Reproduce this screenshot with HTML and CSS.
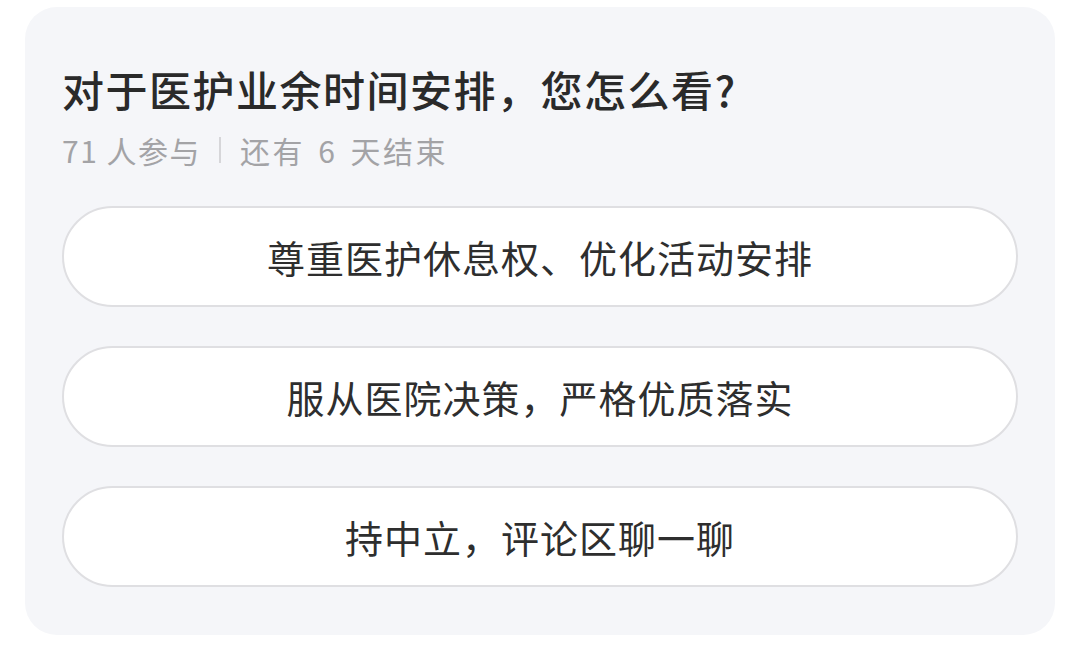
FILE: index.html
```html
<!DOCTYPE html>
<html lang="zh-CN">
<head>
<meta charset="utf-8">
<link rel="stylesheet" href="styles.css">
</head>
<body>
<div class="card">
  <h1 class="title">对于医护业余时间安排，您怎么看?</h1>
  <div class="meta"><span>71 人参与</span><span class="sep"></span><span class="remain">还有 6 天结束</span></div>
  <div class="options">
    <div class="option">尊重医护休息权、优化活动安排</div>
    <div class="option">服从医院决策，严格优质落实</div>
    <div class="option">持中立，评论区聊一聊</div>
  </div>
</div>
</body>
</html>
```
FILE: styles.css
```css
html, body {
  margin: 0;
  padding: 0;
  background: #ffffff;
}
body {
  font-family: "Noto Sans CJK SC", "Noto Sans", sans-serif;
  width: 1080px;
  height: 660px;
  overflow: hidden;
}
.card {
  margin: 7px 25px 0 25px;
  height: 628px;
  box-sizing: border-box;
  background: #f5f6f9;
  border-radius: 32px;
  padding: 56px 37px 0 37px;
}
.title {
  margin: 0;
  font-size: 42px;
  line-height: 52px;
  font-weight: 500;
  color: #2a2a2a;
  letter-spacing: 1.5px;
  white-space: nowrap;
}
.meta {
  display: flex;
  align-items: center;
  margin-top: 15px;
  font-size: 30px;
  line-height: 40px;
  color: #a3a3a6;
  letter-spacing: 1.5px;
  white-space: pre;
}
.remain {
  letter-spacing: 2.5px;
  word-spacing: 4px;
}
.sep {
  display: inline-block;
  width: 2px;
  height: 26px;
  background: #d6d6d9;
  margin: 0 19px 0 18px;
}
.options {
  display: flex;
  flex-direction: column;
  gap: 39px;
  margin-top: 36px;
}
.option {
  height: 101px;
  box-sizing: border-box;
  border: 2px solid #dfdfe2;
  border-radius: 51px;
  background: #ffffff;
  display: flex;
  align-items: center;
  justify-content: center;
  font-size: 38px;
  color: #2e2e2e;
  letter-spacing: 1px;
}
```
